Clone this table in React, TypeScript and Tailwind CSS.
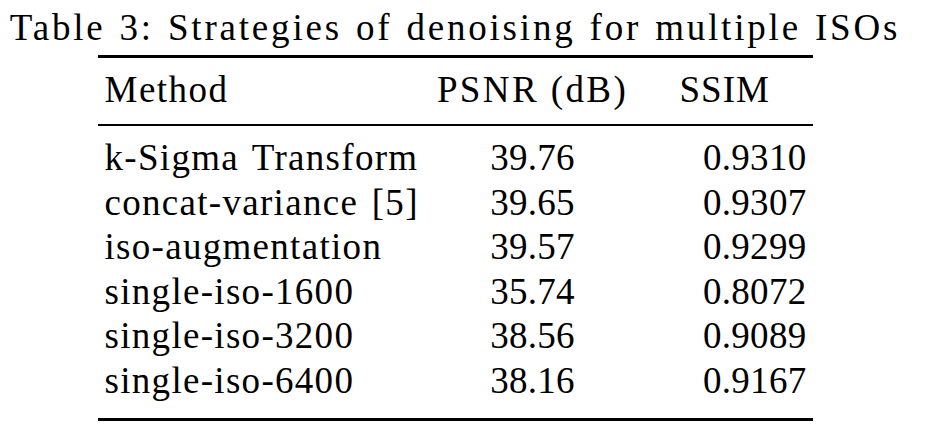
const rows = [
  { method: "k-Sigma Transform", psnr: "39.76", ssim: "0.9310" },
  { method: "concat-variance [5]", psnr: "39.65", ssim: "0.9307" },
  { method: "iso-augmentation", psnr: "39.57", ssim: "0.9299" },
  { method: "single-iso-1600", psnr: "35.74", ssim: "0.8072" },
  { method: "single-iso-3200", psnr: "38.56", ssim: "0.9089" },
  { method: "single-iso-6400", psnr: "38.16", ssim: "0.9167" },
];

export default function App() {
  return (
    <div
      className="w-[940px] h-[438px] bg-white text-black overflow-hidden"
      style={{ fontFamily: '"Liberation Serif", "DejaVu Serif", serif' }}
    >
      <div className="w-[910px] flex flex-col items-center pt-[6px]">
        {/* Caption */}
        <p className="text-[37px] leading-[43px] whitespace-nowrap tracking-[2.8px] [word-spacing:2px]">
          Table 3: Strategies of denoising for multiple ISOs
        </p>

        {/* Table */}
        <div className="w-[715px] mt-[6px] border-t-[3px] border-b-[3px] border-black text-[37px]">
          <div className="grid grid-cols-[332px_206px_177px] leading-[43px] pt-[10px] pb-[13px] border-b-2 border-black whitespace-nowrap">
            <div className="pl-[7px] tracking-[1.5px]">Method</div>
            <div className="text-center tracking-[2.4px]">PSNR (dB)</div>
            <div className="pl-[44px] tracking-[1px]">SSIM</div>
          </div>
          <div className="pt-[10px] pb-[14px] leading-[44.6px]">
            {rows.map((r) => (
              <div key={r.method} className="grid grid-cols-[332px_206px_177px] whitespace-nowrap">
                <div className="pl-[7px] tracking-[1.3px] [word-spacing:3px]">{r.method}</div>
                <div className="text-center tracking-[0.3px]">{r.psnr}</div>
                <div className="text-right pr-[6px] tracking-[0.3px]">{r.ssim}</div>
              </div>
            ))}
          </div>
        </div>
      </div>
    </div>
  );
}
